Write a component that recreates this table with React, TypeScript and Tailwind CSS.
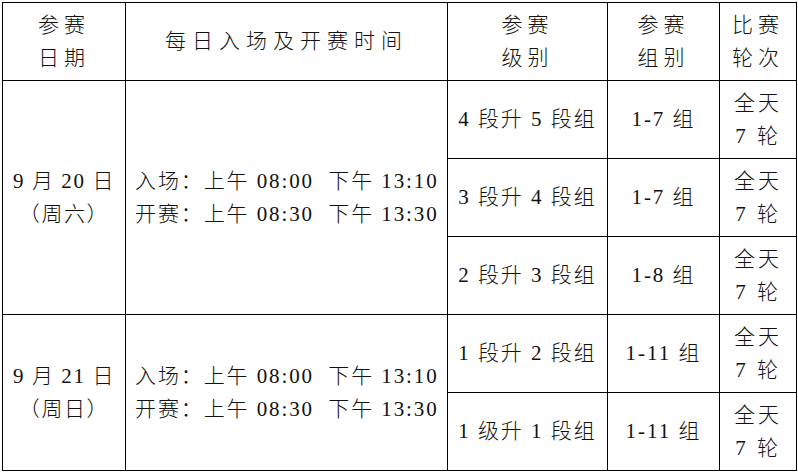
const font = { fontFamily: '"Liberation Serif", "Noto Sans CJK SC", serif' };

const cell = "border-[1.5px] border-black text-center align-middle leading-[33px]";

function TwoLine({ a, b, className = "" }: { a: string; b: string; className?: string }) {
  return (
    <div className={className}>
      <div>{a}</div>
      <div>{b}</div>
    </div>
  );
}

function Times() {
  return (
    <div className="text-left pl-[9px] tracking-[1.9px] leading-[33px]">
      <div>入场：上午 08:00&nbsp; 下午 13:10</div>
      <div>开赛：上午 08:30&nbsp; 下午 13:30</div>
    </div>
  );
}

const groups = [
  { level: "4 段升 5 段组", group: "1-7 组" },
  { level: "3 段升 4 段组", group: "1-7 组" },
  { level: "2 段升 3 段组", group: "1-8 组" },
  { level: "1 段升 2 段组", group: "1-11 组" },
  { level: "1 级升 1 段组", group: "1-11 组" },
];

export default function App() {
  return (
    <div className="w-[798px] h-[474px] bg-white pl-[2px] pt-[2px] text-[#111]" style={font}>
      <table className="table-fixed border-collapse text-[21px] font-light w-[794px]">
        <colgroup>
          <col className="w-[123px]" />
          <col className="w-[322px]" />
          <col className="w-[160px]" />
          <col className="w-[112px]" />
          <col className="w-[77px]" />
        </colgroup>
        <tbody>
          <tr className="h-[78px]">
            <td className={cell}>
              <TwoLine a="参赛" b="日期" className="tracking-[5px]" />
            </td>
            <td className={`${cell} tracking-[6px]`}>每日入场及开赛时间</td>
            <td className={cell}>
              <TwoLine a="参赛" b="级别" className="tracking-[5px]" />
            </td>
            <td className={cell}>
              <TwoLine a="参赛" b="组别" className="tracking-[5px]" />
            </td>
            <td className={cell}>
              <TwoLine a="比赛" b="轮次" className="tracking-[5px]" />
            </td>
          </tr>
          {groups.map((g, i) => (
            <tr key={i} className={i === 3 ? "h-[78px]" : "h-[78px]"}>
              {i === 0 && (
                <td className={cell} rowSpan={3}>
                  <TwoLine a="9 月 20 日" b="（周六）" className="tracking-[1.6px]" />
                </td>
              )}
              {i === 0 && (
                <td className={cell} rowSpan={3}>
                  <Times />
                </td>
              )}
              {i === 3 && (
                <td className={cell} rowSpan={2}>
                  <TwoLine a="9 月 21 日" b="（周日）" className="tracking-[1.6px]" />
                </td>
              )}
              {i === 3 && (
                <td className={cell} rowSpan={2}>
                  <Times />
                </td>
              )}
              <td className={`${cell} tracking-[2px]`}>{g.level}</td>
              <td className={`${cell} tracking-[2px]`}>{g.group}</td>
              <td className={cell}>
                <TwoLine a="全天" b="7 轮" className="tracking-[3px]" />
              </td>
            </tr>
          ))}
        </tbody>
      </table>
    </div>
  );
}
